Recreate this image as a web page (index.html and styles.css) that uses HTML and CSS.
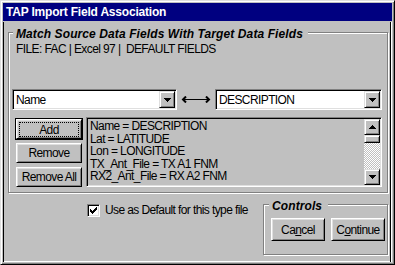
FILE: index.html
```html
<!DOCTYPE html>
<html lang="en">
<head>
    <meta charset="UTF-8">
    <title>TAP Import Field Association</title>
    <link rel="stylesheet" href="styles.css">
</head>
<body>
    <div class="window">
        <div class="titlebar">TAP Import Field Association</div>

        <div class="client">
            <div class="group main-group">
                <span class="legend">Match Source Data Fields With Target Data Fields</span>
                <div class="file-info">FILE: FAC | Excel 97 |&nbsp; DEFAULT FIELDS</div>

                <div class="combo-row">
                    <div class="combo source-combo">
                        <span class="combo-text">Name</span>
                        <span class="drop-btn">
                            <svg width="7" height="4" shape-rendering="crispEdges"><path d="M0 0h7v1H0z M1 1h5v1H1z M2 2h3v1H2z M3 3h1v1H3z"/></svg>
                        </span>
                    </div>
                    <svg class="link-arrow" width="30" height="7" viewBox="0 0 30 7">
                        <polyline points="5,0.5 2,3.5 5,6.5" fill="none" stroke="#000" stroke-width="2"/>
                        <rect x="3" y="3" width="24" height="1" fill="#000"/>
                        <polyline points="25,0.5 28,3.5 25,6.5" fill="none" stroke="#000" stroke-width="2"/>
                    </svg>
                    <div class="combo target-combo">
                        <span class="combo-text">DESCRIPTION</span>
                        <span class="drop-btn">
                            <svg width="7" height="4" shape-rendering="crispEdges"><path d="M0 0h7v1H0z M1 1h5v1H1z M2 2h3v1H2z M3 3h1v1H3z"/></svg>
                        </span>
                    </div>
                </div>

                <div class="map-row">
                    <div class="btn-col">
                        <button class="btn default-btn"><span class="focus-rect">Add</span></button>
                        <button class="btn">Remove</button>
                        <button class="btn">Remove All</button>
                    </div>
                    <div class="listbox">
                        <ul class="list-items">
                            <li>Name = DESCRIPTION</li>
                            <li>Lat = LATITUDE</li>
                            <li>Lon = LONGITUDE</li>
                            <li>TX_Ant_File = TX A1 FNM</li>
                            <li>RX2_Ant_File = RX A2 FNM</li>
                        </ul>
                        <div class="scrollbar">
                            <span class="sb-btn">
                                <svg width="7" height="4" shape-rendering="crispEdges"><path d="M3 0h1v1H3z M2 1h3v1H2z M1 2h5v1H1z M0 3h7v1H0z"/></svg>
                            </span>
                            <span class="sb-thumb"></span>
                            <span class="sb-track"></span>
                            <span class="sb-btn">
                                <svg width="7" height="4" shape-rendering="crispEdges"><path d="M0 0h7v1H0z M1 1h5v1H1z M2 2h3v1H2z M3 3h1v1H3z"/></svg>
                            </span>
                        </div>
                    </div>
                </div>
            </div>

            <div class="bottom-row">
                <label class="check">
                    <span class="check-box">
                        <svg width="7" height="7" shape-rendering="crispEdges"><path d="M6 0h1v1H6z M5 1h2v1H5z M0 2h1v1H0z M4 2h3v1H4z M0 3h2v1H0z M3 3h3v1H3z M0 4h5v1H0z M1 5h3v1H1z M2 6h1v1H2z"/></svg>
                    </span>
                    Use as Default for this type file
                </label>
                <div class="group controls-group">
                    <span class="legend">Controls</span>
                    <button class="btn ctl-btn">Ca<u>n</u>cel</button>
                    <button class="btn ctl-btn">C<u>o</u>ntinue</button>
                </div>
            </div>
        </div>
    </div>
</body>
</html>
```

FILE: styles.css
```css
/* Basic styling */
body {
    margin: 0;
    background-color: #c0c0c0;
    font-family: "Liberation Sans", Arial, sans-serif;
    font-size: 12px;
    letter-spacing: -0.6px;
    color: #000;
}
.window {
    width: 395px;
    height: 265px;
    box-sizing: border-box;
    border: 1px solid;
    border-color: #dfdfdf #000 #000 #dfdfdf;
    box-shadow: inset 1px 1px #fff, inset -1px -1px #808080;
    padding: 2px;
    display: flex;
    flex-direction: column;
}
.titlebar {
    height: 18px;
    line-height: 18px;
    background-color: #000080;
    color: #fff;
    font-weight: bold;
    letter-spacing: -0.2px;
    padding-left: 3px;
}
.client {
    flex: 1;
    margin-top: 1px;
    box-shadow: inset 1px 0 #000, inset -1px 0 #fff, inset -2px 0 #000, inset 0 -1px #fff;
}
/* Group boxes */
.group {
    position: relative;
    box-sizing: border-box;
    border: 1px solid #808080;
    box-shadow: inset 1px 1px #fff, 1px 1px #fff;
}
.legend {
    position: absolute;
    top: -5px;
    line-height: 13px;
    background-color: #c0c0c0;
    font-weight: bold;
    font-style: italic;
    letter-spacing: 0.1px;
    white-space: nowrap;
}
.main-group {
    width: 380px;
    height: 161px;
    margin: 10px 0 0 5px;
    padding: 10px 4px 0 3px;
}
.main-group .legend {
    left: 4px;
    padding: 0 5px 0 3px;
}
.file-info {
    margin-left: 4px;
    line-height: 13px;
    white-space: nowrap;
}
/* Combo boxes */
.combo-row {
    display: flex;
    align-items: center;
    margin-top: 33px;
}
.combo,
.listbox,
.check-box {
    box-sizing: border-box;
    border: 1px solid;
    border-color: #808080 #fff #fff #808080;
    box-shadow: inset 1px 1px #000, inset -1px -1px #dfdfdf;
}
.combo {
    height: 21px;
    padding: 1px;
    background-color: #fff;
    display: flex;
    align-items: center;
}
.source-combo {
    width: 165px;
}
.target-combo {
    width: 167px;
}
.combo-text {
    flex: 1;
    padding-left: 2px;
}
.link-arrow {
    margin: 0 4px;
}
.drop-btn,
.sb-btn,
.sb-thumb {
    box-sizing: border-box;
    border: 1px solid;
    border-color: #dfdfdf #000 #000 #dfdfdf;
    box-shadow: inset 1px 1px #fff, inset -1px -1px #808080;
    background-color: #c0c0c0;
    display: flex;
    align-items: center;
    justify-content: center;
}
.drop-btn {
    width: 16px;
    height: 17px;
}
/* Buttons and list */
.map-row {
    display: flex;
    margin-top: 7px;
}
.btn-col {
    display: flex;
    flex-direction: column;
    gap: 4px;
    margin-left: 4px;
    padding-top: 2px;
}
.btn {
    box-sizing: border-box;
    width: 66px;
    height: 20px;
    padding: 0;
    margin: 0;
    border: 1px solid;
    border-color: #fff #000 #000 #fff;
    box-shadow: inset 1px 1px #dfdfdf, inset -1px -1px #808080;
    background-color: #c0c0c0;
    font: inherit;
    letter-spacing: inherit;
    color: #000;
    display: flex;
    align-items: center;
    justify-content: center;
}
.default-btn {
    outline: 1px solid #000;
}
.focus-rect {
    flex: 1;
    align-self: stretch;
    margin: 2px 2px 1px;
    border: 1px dotted #000;
    display: flex;
    align-items: center;
    justify-content: center;
}
.listbox {
    width: 296px;
    height: 70px;
    margin-left: 4px;
    padding: 1px;
    display: flex;
    background-color: #c0c0c0;
}
.list-items {
    flex: 1;
    list-style-type: none;
    margin: 0;
    padding: 1px 0 0 2px;
    line-height: 12.5px;
    white-space: nowrap;
    overflow: hidden;
}
.scrollbar {
    width: 16px;
    display: flex;
    flex-direction: column;
}
.sb-btn {
    height: 16px;
}
.sb-thumb {
    height: 8px;
}
.sb-track {
    flex: 1;
    background: repeating-conic-gradient(#fff 0 25%, #c0c0c0 0 50%) 0 0 / 2px 2px;
}
/* Bottom row */
.bottom-row {
    display: flex;
    margin-top: 11px;
}
.check {
    display: flex;
    align-items: flex-start;
    gap: 5px;
    margin-left: 84px;
    line-height: 13px;
    white-space: nowrap;
}
.check-box {
    width: 13px;
    height: 13px;
    background-color: #fff;
    display: flex;
    align-items: center;
    justify-content: center;
}
.controls-group {
    width: 125px;
    height: 51px;
    margin: 0 4px 0 auto;
    padding: 13px 0 0 7px;
    display: flex;
    gap: 6px;
}
.controls-group .legend {
    left: 5px;
    padding: 0 6px 0 3px;
}
.ctl-btn {
    width: 54px;
    height: 23px;
}
```
